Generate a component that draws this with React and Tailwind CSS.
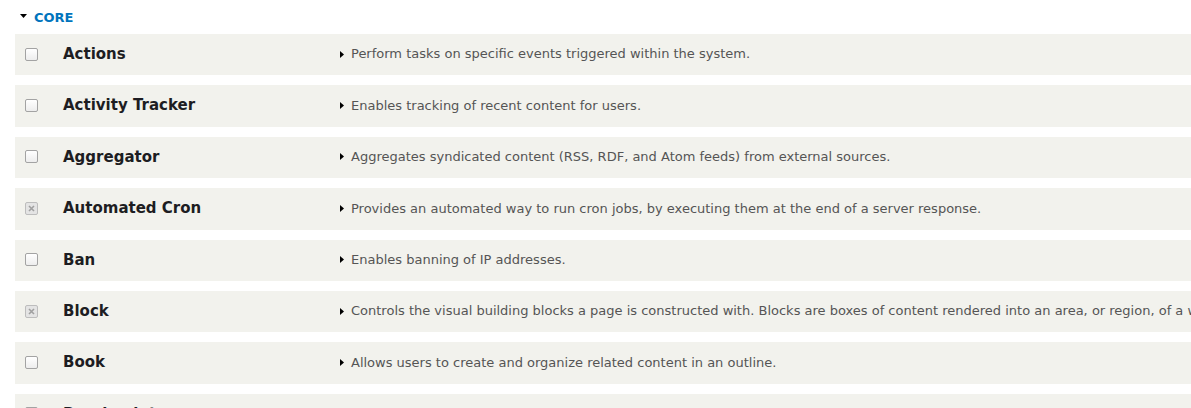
const modules = [
  { name: 'Actions', desc: 'Perform tasks on specific events triggered within the system.' },
  { name: 'Activity Tracker', desc: 'Enables tracking of recent content for users.' },
  { name: 'Aggregator', desc: 'Aggregates syndicated content (RSS, RDF, and Atom feeds) from external sources.' },
  { name: 'Automated Cron', desc: 'Provides an automated way to run cron jobs, by executing them at the end of a server response.', locked: true },
  { name: 'Ban', desc: 'Enables banning of IP addresses.' },
  { name: 'Block', desc: 'Controls the visual building blocks a page is constructed with. Blocks are boxes of content rendered into an area, or region, of a web page.', locked: true },
  { name: 'Book', desc: 'Allows users to create and organize related content in an outline.' },
  { name: 'Breakpoint', desc: 'Manages breakpoints and breakpoint groups for responsive designs.' },
];

function Checkbox({ locked }) {
  if (locked) {
    return (
      <span className="flex h-[13px] w-[13px] items-center justify-center rounded-[2px] border border-[#bdbdbd] bg-[#e4e4e4]">
        <svg width="7" height="7" viewBox="0 0 7 7">
          <path d="M1 1 L6 6 M6 1 L1 6" stroke="#a0a0a0" strokeWidth="1.6" />
        </svg>
      </span>
    );
  }
  return <span className="block h-[13px] w-[13px] rounded-[2px] border border-[#a3a3a3] bg-gradient-to-b from-[#ffffff] to-[#ededed]" />;
}

function ModuleRow({ name, desc, locked }) {
  return (
    <div className="flex h-[41.4px] shrink-0 items-center whitespace-nowrap bg-[#f2f2ed] pb-[1px] pl-[10px]">
      <div className="w-[38px] shrink-0">
        <Checkbox locked={locked} />
      </div>
      <div className="w-[277px] shrink-0 text-[15px] font-bold text-[#1d1d22]">{name}</div>
      <div className="flex items-center text-[13px] text-[#555555]">
        <svg width="4" height="7" viewBox="0 0 4 7" className="mr-[7px] shrink-0">
          <path d="M0 0 L4 3.5 L0 7 Z" fill="#000" />
        </svg>
        {desc}
      </div>
    </div>
  );
}

export default function App() {
  return (
    <div className="h-[408px] w-full overflow-hidden bg-white pl-[15px] font-['DejaVu_Sans',sans-serif]">
      <div className="flex h-[34px] items-center pl-[5px] pt-[1px]">
        <svg width="7" height="4" viewBox="0 0 7 4" className="mb-[3px] mr-[7px]">
          <path d="M0 0 L7 0 L3.5 4 Z" fill="#000" />
        </svg>
        <span className="text-[13px] font-bold uppercase text-[#0074bd]">Core</span>
      </div>
      <div className="flex flex-col gap-[10px]">
        {modules.map((m) => (
          <ModuleRow key={m.name} {...m} />
        ))}
      </div>
    </div>
  );
}
